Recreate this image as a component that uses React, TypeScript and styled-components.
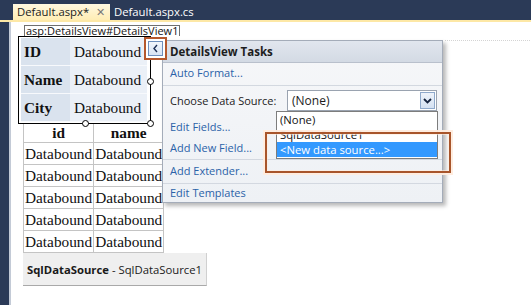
import React from 'react';
import styled, { createGlobalStyle } from 'styled-components';

const GlobalStyle = createGlobalStyle`
  html, body {
    margin: 0;
    padding: 0;
    background: #ffffff;
  }
  body {
    width: 531px;
    height: 308px;
    overflow: hidden;
    font-family: "Open Sans", "Noto Sans", sans-serif;
  }
`;

const Window = styled.div`
  width: 531px;
  height: 308px;
  display: flex;
  flex-direction: column;
`;

const TabStrip = styled.div`
  height: 20px;
  flex: none;
  display: flex;
  align-items: flex-end;
  padding-left: 13px;
  background: #2b3a57;
  border-bottom: 2px solid #fde8a6;
`;

const Tab = styled.div<{ $active?: boolean }>`
  height: 16px;
  width: ${(p) => (p.$active ? '97px' : 'auto')};
  box-sizing: border-box;
  display: flex;
  align-items: center;
  justify-content: space-between;
  padding: 0 5px 0 4px;
  font-size: 11.3px;
  line-height: 16px;
  color: ${(p) => (p.$active ? '#1b1b1b' : '#ffffff')};
  background: ${(p) => (p.$active ? 'linear-gradient(#fff8e0, #ffedb4)' : 'transparent')};
`;

const TabClose = styled.span`
  color: #7a7a7a;
  font-size: 11px;
`;

const Main = styled.div`
  flex: 1;
  display: flex;
`;

const LeftStrip = styled.div`
  width: 9px;
  height: 283px;
  flex: none;
  background: #2b3a57;
  border-right: 2px solid #c3cad6;
`;

const Canvas = styled.div`
  flex: 1;
  position: relative;
  padding: 3px 0 0 7px;
`;

const TagLabel = styled.div`
  display: block;
  width: max-content;
  margin-left: 6px;
  height: 10px;
  padding: 0 1px;
  border: 1px solid #6f6f6f;
  border-bottom: none;
  font-size: 11px;
  line-height: 10px;
  color: #111;
`;

const Selection = styled.div`
  position: relative;
  width: 133px;
  box-sizing: border-box;
  border: 1px solid #000;
  padding: 1px 2px;
`;

const Handle = styled.span`
  position: absolute;
  width: 5px;
  height: 5px;
  border: 1px solid #000;
  border-radius: 50%;
  background: #fff;
`;

const DetailsTable = styled.div`
  display: grid;
  grid-template-columns: 49px 77px;
  font-family: "Liberation Serif", serif;
  font-size: 15.3px;
  color: #111;
`;

const DetailsCell = styled.div<{ $head?: boolean }>`
  height: 28px;
  box-sizing: border-box;
  display: flex;
  align-items: center;
  padding-left: ${(p) => (p.$head ? '3px' : '4px')};
  font-weight: ${(p) => (p.$head ? 700 : 400)};
  background: ${(p) => (p.$head ? '#dae3ee' : '#ebf0f7')};
  border-bottom: 1px solid #f7f9fc;
`;

const Grid = styled.table`
  margin-left: 5px;
  border-collapse: collapse;
  font-family: "Liberation Serif", serif;
  font-size: 15.3px;
  color: #111;
`;

const GridCell = styled.td<{ $head?: boolean }>`
  width: 67px;
  height: ${(p) => (p.$head ? '18px' : '21px')};
  padding: 0 1px;
  border: 1px solid #c4c4c4;
  border-top: ${(p) => (p.$head ? 'none' : '1px solid #c4c4c4')};
  text-align: ${(p) => (p.$head ? 'center' : 'left')};
  font-weight: ${(p) => (p.$head ? 700 : 400)};
  white-space: nowrap;
  line-height: 18px;
`;

const SourceBox = styled.div`
  margin-left: 5px;
  width: 184px;
  height: 33px;
  box-sizing: border-box;
  display: flex;
  align-items: center;
  padding-left: 4px;
  background: #efefef;
  border-bottom: 1px solid #a9a9a9;
  border-right: 1px solid #d0d0d0;
  font-size: 11.3px;
  white-space: nowrap;
  color: #1a1a1a;
  b {
    font-weight: 700;
  }
`;

const SmartTag = styled.div`
  position: absolute;
  left: 133px;
  top: 15px;
  width: 23px;
  height: 23px;
  box-sizing: border-box;
  border: 2px solid #b5582d;
  background: #fff;
  display: flex;
  align-items: center;
  justify-content: center;
  z-index: 3;
`;

const SmartButton = styled.div`
  width: 13px;
  height: 13px;
  border: 1px solid #6e8fbd;
  background: linear-gradient(#f2f6fc, #d8e4f4);
  display: flex;
  align-items: center;
  justify-content: center;
`;

const Panel = styled.div`
  position: absolute;
  left: 151px;
  top: 18px;
  width: 281px;
  height: 163px;
  box-sizing: border-box;
  border: 1px solid #a4acb9;
  background: linear-gradient(#f6f7f9, #eef1f5);
  box-shadow: 3px 3px 4px rgba(0, 0, 0, 0.28);
  z-index: 2;
`;

const PanelHeader = styled.div`
  height: 21px;
  display: flex;
  align-items: center;
  padding-left: 7px;
  background: linear-gradient(#e1e6ee, #d3dae4);
  border-bottom: 1px solid #b9c0cc;
  font-size: 11.5px;
  font-weight: 700;
  color: #1d1d1d;
`;

const Group = styled.div<{ $last?: boolean }>`
  padding: 0 5px 0 7px;
  border-bottom: ${(p) => (p.$last ? 'none' : '1px solid #d3d8e0')};
`;

const Item = styled.div<{ $link?: boolean; $h?: number }>`
  height: ${(p) => p.$h ?? 21}px;
  display: flex;
  align-items: center;
  justify-content: space-between;
  font-size: 11px;
  line-height: 14px;
  padding-bottom: 2px;
  box-sizing: border-box;
  color: ${(p) => (p.$link ? '#2b62a8' : '#1b1b1b')};
`;

const Combo = styled.div`
  width: 150px;
  height: 21px;
  box-sizing: border-box;
  display: flex;
  align-items: center;
  justify-content: space-between;
  padding-left: 4px;
  border: 1px solid #9aa3b0;
  background: #fff;
  font-size: 12px;
  color: #1b1b1b;
`;

const ComboArrow = styled.div`
  width: 15px;
  height: 17px;
  margin-right: 1px;
  box-sizing: border-box;
  border: 1px solid #8fa9cb;
  background: linear-gradient(#eef3fa, #d4e1f2);
  display: flex;
  align-items: center;
  justify-content: center;
`;

const DropList = styled.div`
  position: absolute;
  left: 113px;
  top: 70px;
  width: 162px;
  height: 48px;
  box-sizing: border-box;
  border: 1px solid #7d7d7d;
  background: #fff;
  font-size: 11.3px;
  color: #111;
  z-index: 1;
`;

const DropItem = styled.div<{ $selected?: boolean }>`
  height: 15px;
  line-height: 15px;
  padding-left: 3px;
  overflow: hidden;
  background: ${(p) => (p.$selected ? '#3399ff' : 'transparent')};
  color: ${(p) => (p.$selected ? '#fff' : '#111')};
`;

const Highlight = styled.div`
  position: absolute;
  left: 102px;
  top: 91px;
  width: 186px;
  height: 41px;
  box-sizing: border-box;
  border: 2px solid #a8552b;
  box-shadow: 0 0 0 2px rgba(255, 236, 222, 0.95), inset 0 0 0 1px rgba(255, 236, 222, 0.6);
  z-index: 4;
`;

const SurfaceEdge = styled.div`
  position: absolute;
  left: 434px;
  top: 18px;
  width: 85px;
  border-top: 1px dotted #d4d4d4;
`;

const details = [
  ['ID', 'Databound'],
  ['Name', 'Databound'],
  ['City', 'Databound'],
];

function App() {
  return (
    <Window>
      <GlobalStyle />
      <TabStrip>
        <Tab $active>
          Default.aspx*
          <TabClose>✕</TabClose>
        </Tab>
        <Tab>Default.aspx.cs</Tab>
      </TabStrip>
      <Main>
        <LeftStrip />
        <Canvas>
          <TagLabel>asp:DetailsView#DetailsView1</TagLabel>
          <Selection>
            <DetailsTable>
              {details.map(([k, v]) => (
                <React.Fragment key={k}>
                  <DetailsCell $head>{k}</DetailsCell>
                  <DetailsCell>{v}</DetailsCell>
                </React.Fragment>
              ))}
            </DetailsTable>
            <Handle style={{ left: 128, top: 41 }} />
            <Handle style={{ left: 128, top: 83 }} />
            <Handle style={{ left: 63, top: 83 }} />
          </Selection>
          <Grid>
            <tbody>
              <tr>
                <GridCell $head>id</GridCell>
                <GridCell $head>name</GridCell>
              </tr>
              {[0, 1, 2, 3, 4].map((i) => (
                <tr key={i}>
                  <GridCell>Databound</GridCell>
                  <GridCell>Databound</GridCell>
                </tr>
              ))}
            </tbody>
          </Grid>
          <SourceBox>
            <b>SqlDataSource</b>&nbsp;- SqlDataSource1
          </SourceBox>

          <SmartTag>
            <SmartButton>
              <svg width="7" height="9" viewBox="0 0 7 9">
                <polyline points="5,1 2,4.5 5,8" fill="none" stroke="#1d2f55" strokeWidth="1.4" />
              </svg>
            </SmartButton>
          </SmartTag>

          <SurfaceEdge />

          <Panel>
            <PanelHeader>DetailsView Tasks</PanelHeader>
            <Group>
              <Item $link $h={22}>Auto Format...</Item>
            </Group>
            <Group>
              <Item $h={31}>
                Choose Data Source:
                <Combo>
                  (None)
                  <ComboArrow>
                    <svg width="9" height="6" viewBox="0 0 9 6">
                      <polyline points="1,1 4.5,4.5 8,1" fill="none" stroke="#16243f" strokeWidth="1.8" />
                    </svg>
                  </ComboArrow>
                </Combo>
              </Item>
              <Item $link>Edit Fields...</Item>
              <Item $link>Add New Field...</Item>
            </Group>
            <Group>
              <Item $link $h={23}>Add Extender...</Item>
            </Group>
            <Group $last>
              <Item $link $h={20}>Edit Templates</Item>
            </Group>
            <DropList>
              <DropItem>(None)</DropItem>
              <DropItem>SqlDataSource1</DropItem>
              <DropItem $selected>&lt;New data source...&gt;</DropItem>
            </DropList>
            <Highlight />
          </Panel>
        </Canvas>
      </Main>
    </Window>
  );
}

export default App;
